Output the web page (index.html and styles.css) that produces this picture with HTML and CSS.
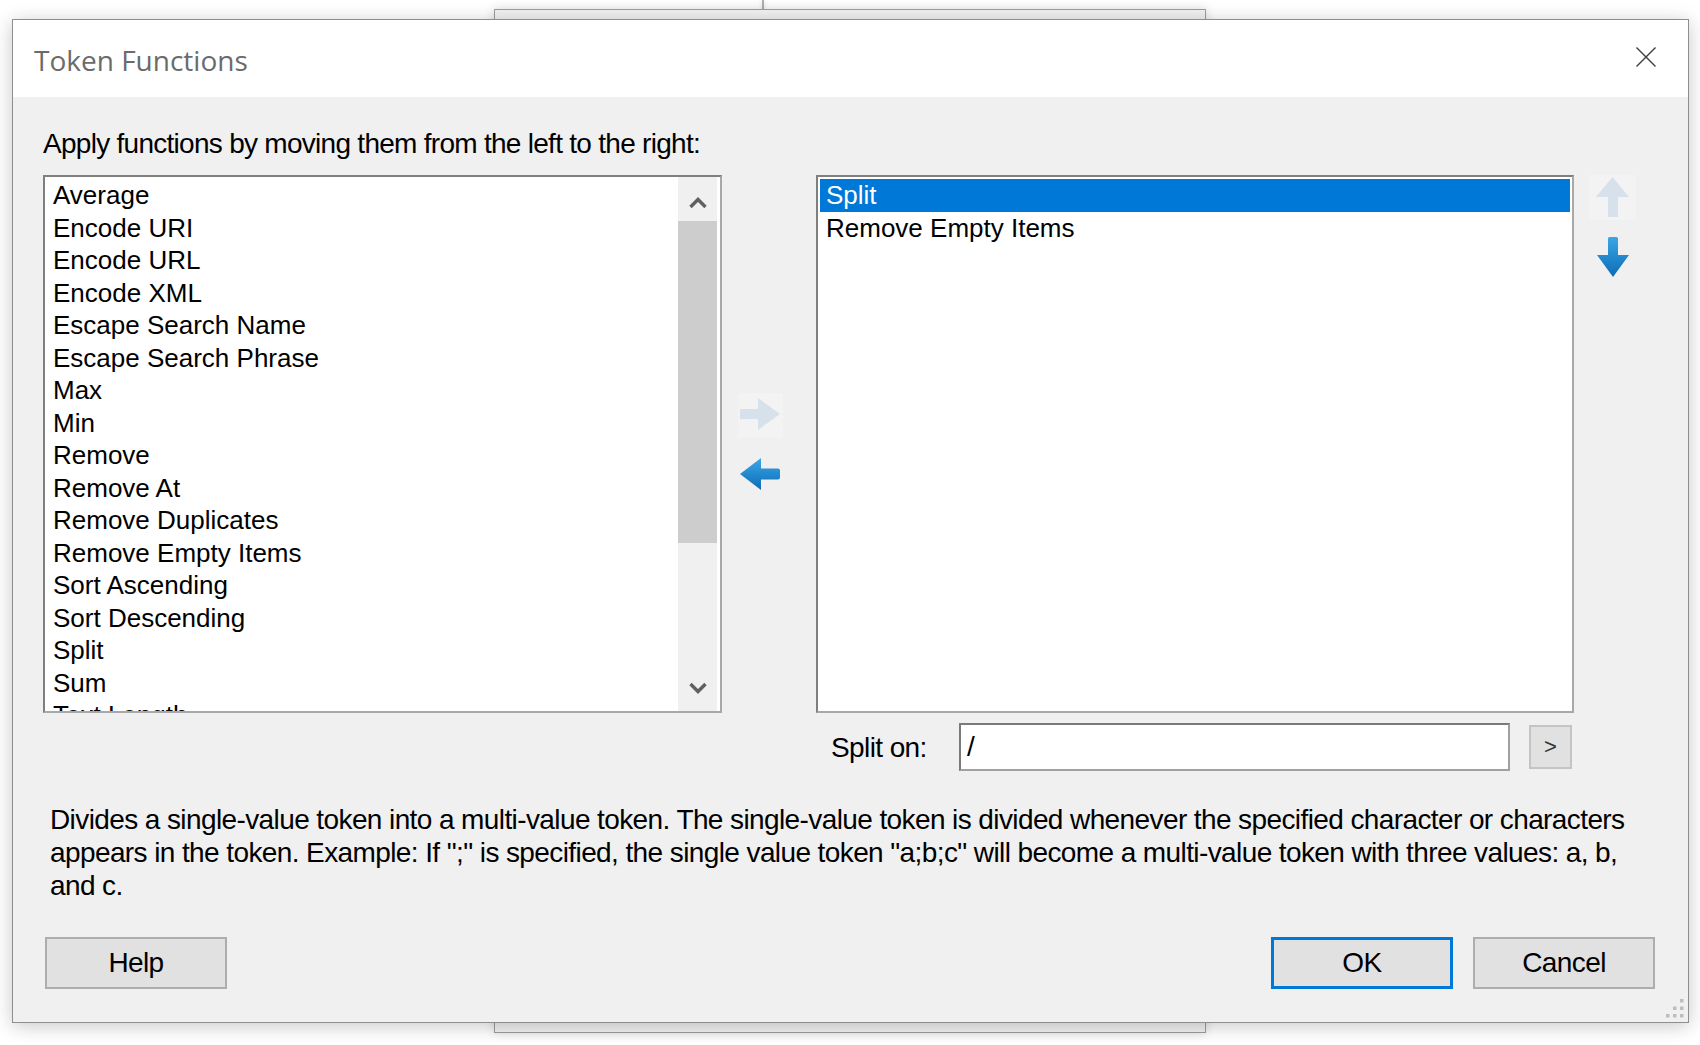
FILE: index.html
```html
<!DOCTYPE html>
<html>
<head>
<meta charset="utf-8">
<title>Token Functions</title>
<link rel="stylesheet" href="styles.css">
</head>
<body>
<div class="desktop">
  <div class="bg-edge"></div>
  <div class="bg-window"></div>
  <div class="dialog">
    <div class="titlebar">
      <span class="title">Token Functions</span>
      <svg class="close" width="20" height="20" viewBox="0 0 20 20"><path d="M0.5 0.5L19.5 19.5M19.5 0.5L0.5 19.5" stroke="#3c3c3c" stroke-width="1.4" fill="none"/></svg>
    </div>
    <div class="body">
      <div class="prompt">Apply functions by moving them from the left to the right:</div>
      <div class="lists">
        <div class="listbox left-list">
          <ul class="items">
            <li>Average</li>
            <li>Encode URI</li>
            <li>Encode URL</li>
            <li>Encode XML</li>
            <li>Escape Search Name</li>
            <li>Escape Search Phrase</li>
            <li>Max</li>
            <li>Min</li>
            <li>Remove</li>
            <li>Remove At</li>
            <li>Remove Duplicates</li>
            <li>Remove Empty Items</li>
            <li>Sort Ascending</li>
            <li>Sort Descending</li>
            <li>Split</li>
            <li>Sum</li>
            <li>Text Length</li>
          </ul>
          <div class="scrollbar">
            <div class="sb-btn"><svg width="20" height="13" viewBox="0 0 20 13"><path d="M2.5 11L10 3.5L17.5 11" stroke="#606060" stroke-width="3.4" fill="none"/></svg></div>
            <div class="sb-track"><div class="sb-thumb"></div></div>
            <div class="sb-btn"><svg width="20" height="13" viewBox="0 0 20 13"><path d="M2.5 2L10 9.5L17.5 2" stroke="#606060" stroke-width="3.4" fill="none"/></svg></div>
          </div>
        </div>
        <div class="move-col">
          <div class="icon-btn disabled">
            <svg width="45" height="45" viewBox="0 0 45 45"><path d="M42 21L20 5L20 16L2 16L2 26L20 26L20 37Z" fill="#d7e1eb"/></svg>
          </div>
          <div class="icon-btn">
            <svg width="45" height="45" viewBox="0 0 45 45"><defs><linearGradient id="gl" x1="0" y1="0" x2="0" y2="1"><stop offset="0" stop-color="#3ba6e6"/><stop offset="1" stop-color="#0c6cb7"/></linearGradient></defs><path d="M2 22L23 6L23 16.5L40 16.5Q42 16.5 42 18.5L42 25.5Q42 27.5 40 27.5L23 27.5L23 38Z" fill="url(#gl)"/></svg>
          </div>
        </div>
        <div class="right-col">
          <div class="listbox right-list">
            <ul class="items">
              <li class="selected">Split</li>
              <li>Remove Empty Items</li>
            </ul>
          </div>
          <div class="split-row">
            <span class="split-label">Split on:</span>
            <div class="textbox">/</div>
            <button class="mini">&gt;</button>
          </div>
        </div>
        <div class="order-col">
          <div class="icon-btn tall disabled">
            <svg width="47" height="45" viewBox="0 0 47 45"><path d="M23.5 2L40 22L29 22L29 42L19 42L19 22L7 22Z" fill="#d7e1eb"/></svg>
          </div>
          <div class="icon-btn tall">
            <svg width="47" height="45" viewBox="0 0 47 45"><defs><linearGradient id="gd" x1="0" y1="0" x2="0" y2="1"><stop offset="0" stop-color="#3ba6e6"/><stop offset="1" stop-color="#0c6cb7"/></linearGradient></defs><path d="M20.5 2Q19 2 19 3.5L19 20L8 20L24 42L40 20L29 20L29 3.5Q29 2 27.5 2Z" fill="url(#gd)"/></svg>
          </div>
        </div>
      </div>
      <p class="desc">Divides a single-value token into a multi-value token. The single-value token is divided whenever the specified character or characters<br>appears in the token. Example: If ";" is specified, the single value token "a;b;c" will become a multi-value token with three values: a, b,<br>and c.</p>
      <div class="buttons">
        <button class="btn">Help</button>
        <span class="spacer"></span>
        <button class="btn default">OK</button>
        <button class="btn">Cancel</button>
      </div>
    </div>
    <svg class="grip" width="20" height="20" viewBox="0 0 20 20">
      <rect x="16" y="1" width="3.5" height="3.5" fill="#bdbdbd"/>
      <rect x="9" y="8.5" width="3.5" height="3.5" fill="#bdbdbd"/>
      <rect x="16" y="8.5" width="3.5" height="3.5" fill="#bdbdbd"/>
      <rect x="2" y="16" width="3.5" height="3.5" fill="#bdbdbd"/>
      <rect x="9" y="16" width="3.5" height="3.5" fill="#bdbdbd"/>
      <rect x="16" y="16" width="3.5" height="3.5" fill="#bdbdbd"/>
    </svg>
  </div>
</div>
</body>
</html>
```

FILE: styles.css
```css
html, body {
  margin: 0;
  padding: 0;
  background: #ffffff;
}

.desktop {
  position: relative;
  width: 1700px;
  height: 1045px;
  overflow: hidden;
  background: #ffffff;
  font-family: "Liberation Sans", Arial, sans-serif;
  color: #000;
}

.bg-edge {
  position: absolute;
  left: 762px;
  top: 0;
  width: 2px;
  height: 10px;
  background: #b0b0b0;
  box-shadow: 0 0 4px rgba(0, 0, 0, 0.15);
}

.bg-window {
  position: absolute;
  left: 494px;
  top: 9px;
  width: 710px;
  height: 1022px;
  border: 1px solid #9c9c9c;
  background: #f1f1f1;
  box-shadow: 0 0 10px rgba(0, 0, 0, 0.15);
}

.dialog {
  position: absolute;
  left: 12px;
  top: 19px;
  width: 1675px;
  height: 1002px;
  border: 1px solid #8e8e8e;
  background: #f0f0f0;
  display: flex;
  flex-direction: column;
  box-shadow: 0 3px 18px rgba(0, 0, 0, 0.22);
}

.titlebar {
  height: 77px;
  flex: none;
  background: #ffffff;
  display: flex;
  align-items: center;
  padding-left: 21px;
  padding-right: 32px;
}

.title {
  font-family: "Open Sans", "Noto Sans", sans-serif;
  font-size: 28px;
  color: #6b6b6b;
  line-height: 1;
  margin-top: 2px;
}

.close {
  margin-left: auto;
  margin-top: -3px;
}

.body {
  flex: 1;
  background: #f0f0f0;
  padding: 30px 0 0 30px;
  display: flex;
  flex-direction: column;
}

.prompt,
.desc,
.btn,
.split-label,
.textbox {
  font-family: "Liberation Sans", Arial, sans-serif;
  font-size: 28px;
  letter-spacing: -0.6px;
}

.prompt {
  line-height: 33px;
  height: 33px;
  white-space: nowrap;
  letter-spacing: -0.72px;
}

.lists {
  margin-top: 15px;
  display: flex;
  align-items: flex-start;
}

.listbox {
  box-sizing: border-box;
  height: 538px;
  flex: none;
  background: #ffffff;
  border: 2px solid #8a8a8a;
  border-color: #7f7f7f #a8a8a8 #a8a8a8 #7f7f7f;
}

.left-list {
  width: 679px;
  display: flex;
}

.items {
  list-style: none;
  margin: 0;
  padding: 2px 2px 0 2px;
  flex: 1;
  overflow: hidden;
}

.items li {
  height: 32.5px;
  line-height: 32.5px;
  padding: 0 6px;
  font-family: "Liberation Sans", Arial, sans-serif;
  font-size: 26px;
  white-space: nowrap;
}

.items li.selected {
  background: #0078d7;
  color: #ffffff;
}

.scrollbar {
  width: 39px;
  margin-right: 3px;
  display: flex;
  flex-direction: column;
  background: #f0f0f0;
}

.sb-btn {
  height: 44px;
  flex: none;
  display: flex;
  align-items: center;
  justify-content: center;
}

.sb-btn:first-child svg {
  margin-top: 6px;
}

.sb-btn:last-child svg {
  margin-bottom: 2px;
}

.sb-track {
  flex: 1;
}

.sb-thumb {
  height: 322px;
  background: #cdcdcd;
}

.move-col {
  width: 94px;
  flex: none;
  box-sizing: border-box;
  padding: 218px 0 0 16px;
  display: flex;
  flex-direction: column;
  gap: 14px;
}

.icon-btn {
  width: 45px;
  height: 45px;
}

.icon-btn.tall {
  width: 47px;
}

.icon-btn svg {
  display: block;
}

.icon-btn.disabled {
  background: #f3f3f3;
}

.right-col {
  width: 758px;
  flex: none;
  display: flex;
  flex-direction: column;
}

.right-list {
  width: 758px;
}

.split-row {
  margin-top: 10px;
  height: 48px;
  display: flex;
  align-items: center;
  padding-left: 15px;
}

.split-label {
  width: 128px;
  line-height: 33px;
}

.textbox {
  box-sizing: border-box;
  width: 551px;
  height: 48px;
  background: #ffffff;
  border: 2px solid #8a8a8a;
  border-color: #7a7a7a #a0a0a0 #a0a0a0 #7a7a7a;
  padding-left: 6px;
  line-height: 44px;
}

.mini {
  box-sizing: border-box;
  margin-left: 19px;
  width: 43px;
  height: 44px;
  padding: 0;
  background: #e1e1e1;
  border: 2px solid #c4c4c4;
  font-family: "Liberation Sans", Arial, sans-serif;
  font-size: 22px;
  color: #333333;
}

.order-col {
  box-sizing: border-box;
  flex: none;
  padding-left: 15px;
  display: flex;
  flex-direction: column;
  gap: 15px;
}

.desc {
  margin: 32px 0 0 7px;
  line-height: 33px;
  white-space: nowrap;
}

.buttons {
  margin-top: 35px;
  margin-left: 2px;
  padding-right: 33px;
  display: flex;
  align-items: center;
  gap: 20px;
}

.spacer {
  flex: 1;
}

.btn {
  box-sizing: border-box;
  width: 182px;
  height: 52px;
  background: #e1e1e1;
  border: 2px solid #adadad;
  color: #000;
  padding: 0;
}

.btn.default {
  border: 3px solid #0078d7;
}

.grip {
  position: absolute;
  right: 4px;
  bottom: 4px;
}
```
